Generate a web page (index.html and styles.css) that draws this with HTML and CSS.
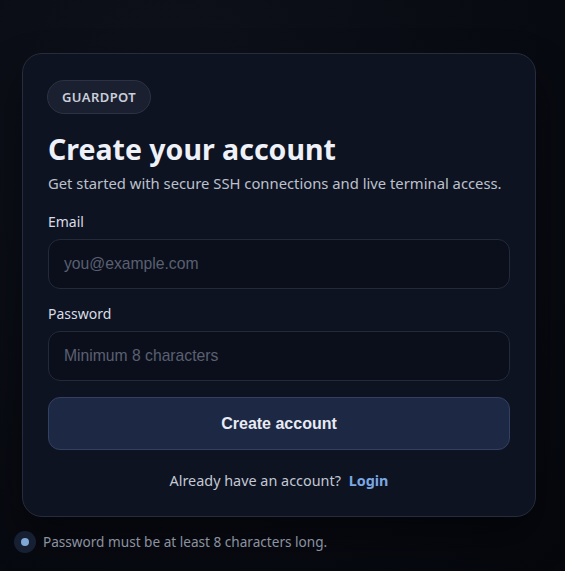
FILE: index.html
```html
<!DOCTYPE html>
<html lang="en">
<head>
<meta charset="utf-8">
<title>Create your account</title>
<link rel="stylesheet" href="styles.css">
</head>
<body>
<main class="page">
  <section class="card">
    <span class="badge">GUARDPOT</span>
    <h1 class="title">Create your account</h1>
    <p class="subtitle">Get started with secure SSH connections and live terminal access.</p>
    <form class="form">
      <label class="field">
        <span class="label">Email</span>
        <input class="input" type="email" placeholder="you@example.com">
      </label>
      <label class="field">
        <span class="label">Password</span>
        <input class="input" type="password" placeholder="Minimum 8 characters">
      </label>
      <button class="submit" type="button">Create account</button>
    </form>
    <p class="switch">Already have an account? <a class="link" href="#">Login</a></p>
  </section>
  <div class="notice">
    <span class="dot"><span class="dot-inner"></span></span>
    <span class="notice-text">Password must be at least 8 characters long.</span>
  </div>
</main>
</body>
</html>
```
FILE: styles.css
```css
html, body {
  margin: 0;
  height: 100%;
}
body {
  background: radial-gradient(ellipse at 30% 20%, #0e111b 0%, #0a0c14 50%, #05070d 100%);
  font-family: "Noto Sans", "Open Sans", sans-serif;
  color: #e8ebf2;
  overflow: hidden;
}
.page {
  padding: 53px 29px 0 22px;
  display: flex;
  flex-direction: column;
}
.card {
  width: 514px;
  box-sizing: border-box;
  background: #0e1322;
  border: 1px solid #262c3b;
  border-radius: 20px;
  padding: 26px 25px 25px 25px;
  display: flex;
  flex-direction: column;
  align-items: flex-start;
  box-shadow: 0 20px 40px rgba(0, 0, 0, 0.45);
}
.badge {
  display: inline-flex;
  align-items: center;
  height: 34px;
  box-sizing: border-box;
  margin-left: -1px;
  padding: 0 14px;
  border-radius: 17px;
  background: #1b2030;
  border: 1px solid #2c3243;
  color: #c9ceda;
  font-size: 13px;
  font-weight: 600;
  letter-spacing: 0.4px;
}
.title {
  margin: 18px 0 0;
  font-size: 28.5px;
  line-height: 34px;
  font-weight: 700;
  color: #eef1f8;
}
.subtitle {
  margin: 7px 0 0;
  font-size: 14.8px;
  line-height: 20px;
  color: #bcc1cc;
}
.form {
  align-self: stretch;
  display: flex;
  flex-direction: column;
  gap: 15px;
  margin-top: 19px;
}
.field {
  display: flex;
  flex-direction: column;
  gap: 7px;
}
.label {
  font-size: 14px;
  line-height: 20px;
  color: #d9dde6;
}
.input {
  height: 50px;
  box-sizing: border-box;
  border-radius: 12px;
  border: 1px solid #232a3a;
  background: #0b0f1c;
  padding: 0 15px;
  font-family: "Liberation Sans", Arial, sans-serif;
  font-size: 15.7px;
  color: #e8ebf2;
  outline: none;
}
.input::placeholder {
  color: #5a6071;
}
.submit {
  height: 53px;
  margin-top: 1px;
  border-radius: 12px;
  border: 1px solid #334060;
  background: #1c2844;
  color: #e8ebf3;
  font-family: "Liberation Sans", Arial, sans-serif;
  font-size: 16px;
  font-weight: 700;
}
.switch {
  align-self: stretch;
  text-align: center;
  margin: 21px 0 0;
  font-size: 14.4px;
  line-height: 20px;
  color: #c3c8d3;
}
.link {
  margin-left: 4px;
  color: #7ba8e2;
  font-weight: 700;
  text-decoration: none;
}
.notice {
  display: flex;
  align-items: center;
  gap: 7px;
  margin: 14px 0 0 -8px;
}
.dot {
  width: 22px;
  height: 22px;
  border-radius: 50%;
  background: #172033;
  display: flex;
  align-items: center;
  justify-content: center;
}
.dot-inner {
  width: 8px;
  height: 8px;
  border-radius: 50%;
  background: #7fa7d8;
}
.notice-text {
  font-size: 13.6px;
  line-height: 20px;
  color: #8c92a0;
}
```
